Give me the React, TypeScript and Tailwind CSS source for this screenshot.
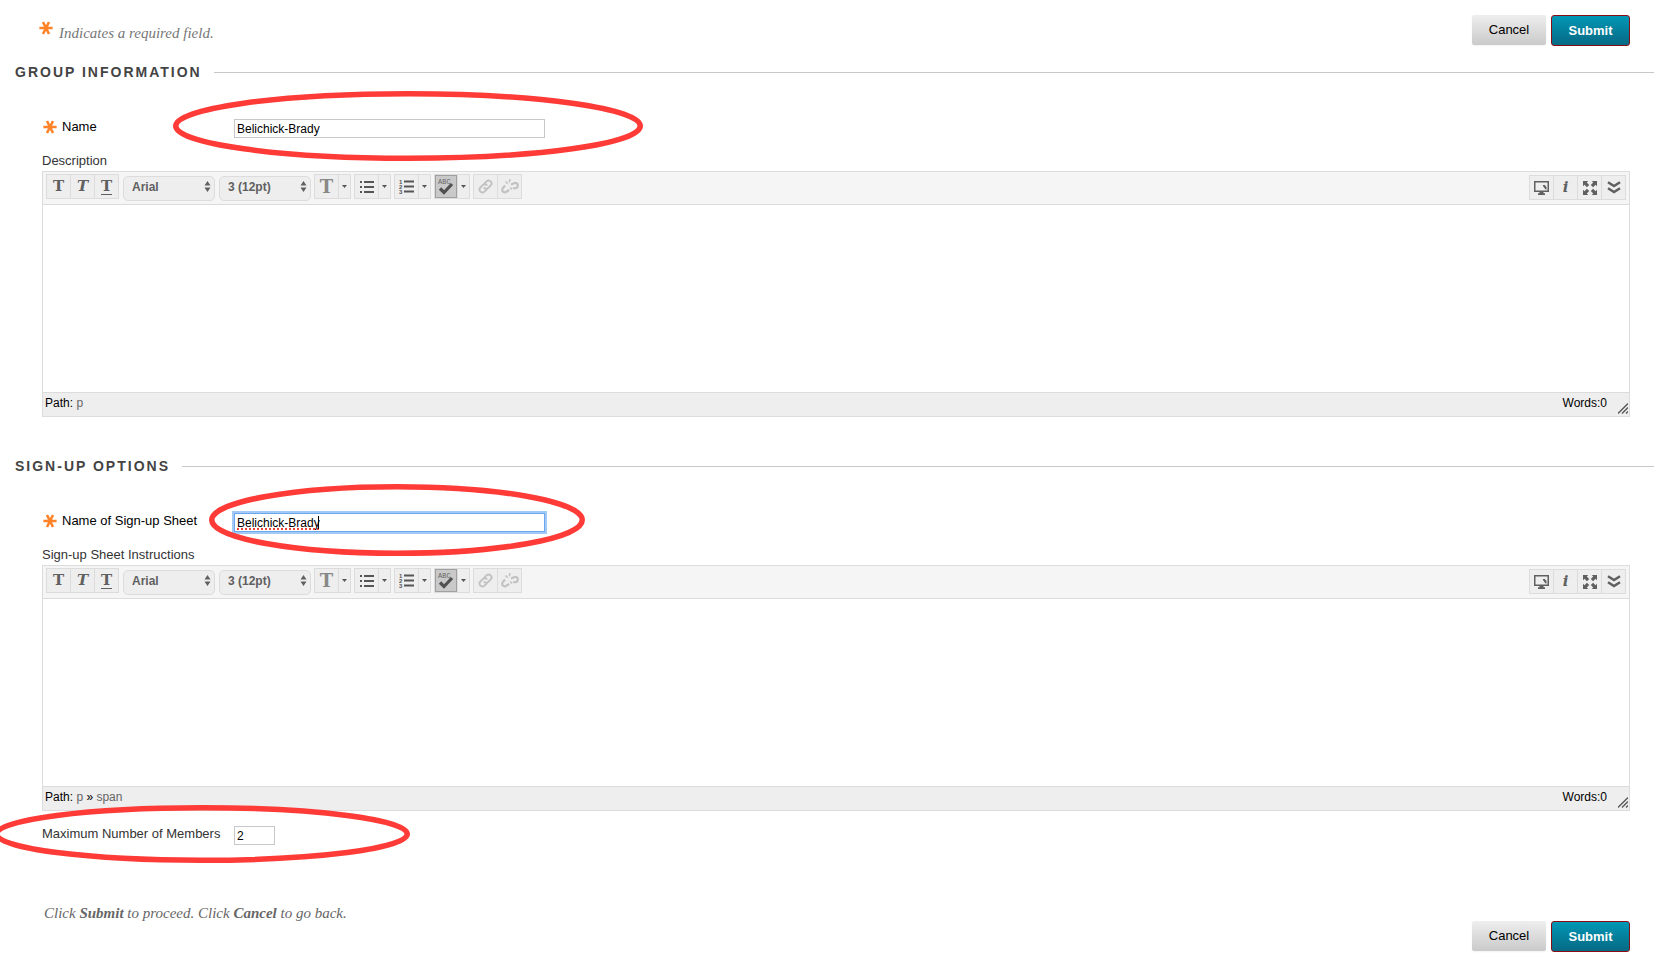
import React from "react";

interface EllipseProps {
  width: number;
  height: number;
  className: string;
}

const Ellipse: React.FC<EllipseProps> = ({ width, height, className }) => (
  <svg
    className={`absolute pointer-events-none max-w-none z-10 ${className}`}
    width={width}
    height={height}
    viewBox={`0 0 ${width} ${height}`}
    aria-hidden="true">
    <ellipse
      cx={width / 2}
      cy={height / 2}
      rx={width / 2 - 2.75}
      ry={height / 2 - 2.75}
      fill="none"
      stroke="#ff3b37"
      strokeWidth="5.5"
    />
  </svg>
);

const Asterisk: React.FC = () => (
  <svg className="w-[14px] h-[14px] shrink-0" viewBox="0 0 14 14" aria-hidden="true">
    <g stroke="#ff8329" strokeWidth="2.6">
      <path d="M0.4 7h13.2M4 1l6 12M10 1L4 13" />
    </g>
  </svg>
);

const Actions: React.FC = () => (
  <div className="flex items-start gap-[5px] text-[13px]">
    <button
      type="button"
      className="h-[30px] w-[74px] rounded-[2px] bg-linear-to-b from-[#eeeeee] to-[#cacaca] text-black shadow-xs">
      Cancel
    </button>
    <button
      type="submit"
      className="h-[31px] w-[79px] rounded-[3px] border border-[#8b0d14] bg-linear-to-b from-[#0099b7] to-[#066883] bg-origin-border font-bold text-white">
      Submit
    </button>
  </div>
);

const SectionHeading: React.FC<{ children: React.ReactNode }> = ({ children }) => (
  <div className="flex items-center gap-3 pl-[15px] pr-0.5">
    <h2 className="text-sm leading-[21px] font-bold tracking-[2px] uppercase text-[#444]">
      {children}
    </h2>
    <div className="h-px flex-1 bg-[#c8c8c8]" />
  </div>
);

const cell = "flex h-[23px] items-center justify-center";
const group =
  "flex border border-[#dcdcdc] bg-[#eeeeee] divide-x divide-[#dcdcdc] text-[#606060]";
const serif = "font-['DejaVu_Serif'] text-[15px] leading-none font-bold";

interface ToolProps {
  label: string;
  className?: string;
  disabled?: boolean;
  children: React.ReactNode;
}

const Tool: React.FC<ToolProps> = ({ label, className = "w-6", disabled, children }) => (
  <button
    type="button"
    aria-label={label}
    disabled={disabled}
    className={`${cell} last:w-[23px] ${className}`}>
    {children}
  </button>
);

const Caret: React.FC<{ label: string }> = ({ label }) => (
  <button type="button" aria-label={label} className={`${cell} w-[11px]`}>
    <svg width="5" height="3" viewBox="0 0 5 3">
      <path d="M0 0h5L2.5 3z" fill="#555" />
    </svg>
  </button>
);

const ToolSelect: React.FC<{ label: string; value: string }> = ({ label, value }) => (
  <div className="relative">
    <select
      aria-label={label}
      className="h-[25px] w-[92px] appearance-none rounded-[5px] border border-[#dcdcdc] bg-[#eeeeee] pl-2 pb-0.5 text-xs font-bold text-[#606060]">
      <option>{value}</option>
    </select>
    <svg
      className="absolute right-1 top-[7px] pointer-events-none"
      width="7"
      height="11"
      viewBox="0 0 7 11">
      <path d="M3.5 0L6.5 4.5h-6zM3.5 11L6.5 6.5h-6z" fill="#606060" />
    </svg>
  </div>
);

const BulletIcon: React.FC = () => (
  <svg width="14" height="12" viewBox="0 0 14 12" fill="#555">
    <path d="M0 0h2v2H0zM0 5h2v2H0zM0 10h2v2H0zM4 0h10v2H4zM4 5h10v2H4zM4 10h10v2H4z" />
  </svg>
);

const NumberIcon: React.FC = () => (
  <svg width="15" height="15" viewBox="0 0 15 15" fill="#555">
    <path d="M5 1.5h10v2H5zM5 6.5h10v2H5zM5 11.5h10v2H5z" />
    <g fontFamily="Liberation Sans" fontSize="6" fontWeight="bold">
      <text x="0" y="4.7">1</text>
      <text x="0" y="9.8">2</text>
      <text x="0" y="15">3</text>
    </g>
  </svg>
);

const SpellIcon: React.FC = () => (
  <svg width="22" height="23" viewBox="0 0 22 23">
    <text x="3" y="9" fontFamily="Liberation Mono" fontSize="7" fill="#666">
      ABC
    </text>
    <path d="M5 13.5l4 4L17 9" fill="none" stroke="#505050" strokeWidth="3.2" />
  </svg>
);

const LinkIcon: React.FC = () => (
  <svg width="15" height="15" viewBox="0 0 15 15" fill="none" stroke="#c2c2c2" strokeWidth="1.9">
    <g transform="rotate(-45 7.5 7.5)">
      <path d="M6.8 10.4H3.2a2.9 2.9 0 0 1 0-5.8h3.6a2.9 2.9 0 0 1 2.7 3.4" />
      <path d="M8.2 4.6h3.6a2.9 2.9 0 0 1 0 5.8H8.2A2.9 2.9 0 0 1 5.5 7" />
    </g>
  </svg>
);

const UnlinkIcon: React.FC = () => (
  <svg width="18" height="15" viewBox="0 0 18 15" fill="none" stroke="#c2c2c2" strokeWidth="2.2">
    <path d="M4 6.5L2 9a2.5 2.5 0 0 0 3.4 3.7L8.2 11" />
    <path d="M10 5.5l2.5-1a2.6 2.6 0 0 1 4.2 2.7c-.4 2-2.4 2.4-4.7 1.8" />
    <path d="M9 0l-.8 3.2M4.5 2.5l2.2 2.2M9.2 8.5l1.8 2" strokeWidth="1.5" />
  </svg>
);

const MonitorIcon: React.FC = () => (
  <svg width="15" height="14" viewBox="0 0 15 14" fill="#606060">
    <path d="M0 0h15v11H0zM1.5 1.5v8h12v-8z" fillRule="evenodd" />
    <path d="M8.8 4h2l1.7 2v2.5h-1L9 5zM5.5 11h4v1.2H11V14H4v-1.8h1.5z" />
  </svg>
);

const ExpandIcon: React.FC = () => (
  <svg width="14" height="14" viewBox="0 0 14 14" fill="#606060">
    <path d="M0 0h5.2L3.8 1.5l2.4 2.4-2.3 2.3-2.4-2.4L0 5.2zM14 0v5.2l-1.5-1.4-2.4 2.4-2.3-2.3 2.4-2.4L8.8 0zM0 14V8.8l1.5 1.4 2.4-2.4 2.3 2.3-2.4 2.4L5.2 14zM14 14H8.8l1.4-1.5-2.4-2.4 2.3-2.3 2.4 2.4L14 8.8z" />
  </svg>
);

const ChevronsIcon: React.FC = () => (
  <svg width="14" height="13" viewBox="0 0 14 13" fill="none" stroke="#606060" strokeWidth="2.5">
    <path d="M1 1.2L7 5l6-3.8M1 7.2L7 11l6-3.8" />
  </svg>
);

interface EditorProps {
  id: string;
  label: string;
  path: string[];
}

const Editor: React.FC<EditorProps> = ({ id, label, path }) => (
  <div className="ml-[42px] mr-[26px] mt-3">
    <label htmlFor={id} className="block pt-px text-[13px] leading-5 text-[#333]">
      {label}
    </label>
    <div className="border border-[#dcdcdc]">
      <div className="flex items-start justify-between border-b border-[#dcdcdc] bg-[#f5f5f5] px-[3px] h-[33px] pt-0.5">
        <div className="flex items-start gap-[3px]">
          <div className={`${group} mr-px`}>
            <Tool label="Bold">
              <span className={serif}>T</span>
            </Tool>
            <Tool label="Italic">
              <span className={`${serif} italic`}>T</span>
            </Tool>
            <Tool label="Underline">
              <span className={`${serif} border-b border-[#606060]`}>T</span>
            </Tool>
          </div>
          <div className="flex gap-1">
            <ToolSelect label="Font" value="Arial" />
            <ToolSelect label="Font size" value="3 (12pt)" />
          </div>
          <div className={group}>
            <Tool label="Text color">
              <span className="font-['DejaVu_Serif'] text-lg leading-none font-bold text-[#888]">T</span>
            </Tool>
            <Caret label="Text color options" />
          </div>
          <div className={group}>
            <Tool label="Bulleted list">
              <BulletIcon />
            </Tool>
            <Caret label="Bulleted list options" />
          </div>
          <div className={group}>
            <Tool label="Numbered list">
              <NumberIcon />
            </Tool>
            <Caret label="Numbered list options" />
          </div>
          <div className={group}>
            <Tool
              label="Spell check"
              className="w-[23px] bg-[#c9c9c9] shadow-[inset_0_0_0_1px_#a0a0a0]">
              <SpellIcon />
            </Tool>
            <Caret label="Spell check options" />
          </div>
          <div className={group}>
            <Tool label="Insert link" disabled>
              <LinkIcon />
            </Tool>
            <Tool label="Remove link" disabled>
              <UnlinkIcon />
            </Tool>
          </div>
        </div>
        <div className={`${group} mt-px`}>
          <Tool label="Preview">
            <MonitorIcon />
          </Tool>
          <Tool label="Help">
            <span className={`${serif} italic`}>i</span>
          </Tool>
          <Tool label="Full screen">
            <ExpandIcon />
          </Tool>
          <Tool label="Show more">
            <ChevronsIcon />
          </Tool>
        </div>
      </div>
      <textarea id={id} className="block h-[187px] w-full resize-none bg-white p-2 outline-none" />
      <div className="flex h-[24px] justify-between border-t border-[#dcdcdc] bg-[#eeeeee] pl-0.5 pr-px text-xs leading-5">
        <div>
          Path:{" "}
          {path.map((tag, i) => (
            <React.Fragment key={tag}>
              {i > 0 && " » "}
              <a href="#" className="text-[#666]">
                {tag}
              </a>
            </React.Fragment>
          ))}
        </div>
        <div className="flex gap-[11px]">
          <span>Words:0</span>
          <svg className="mt-2.5" width="10" height="11" viewBox="0 0 10 11">
            <path d="M0 10.5L10 .5M4 10.5l6-6M8 10.5l2-2" stroke="#555" strokeWidth="1.3" />
          </svg>
        </div>
      </div>
    </div>
  </div>
);

const App: React.FC = () => {
  return (
    <form
      onSubmit={(e) => e.preventDefault()}
      className="overflow-x-hidden bg-white pt-[15px] pb-2 font-['Liberation_Sans',Arial,sans-serif] text-black">
      <div className="flex items-start justify-between pl-[39px] pr-[26px]">
        <div className="flex gap-1.5 pt-1.5">
          <Asterisk />
          <p className="pt-0.5 font-['Liberation_Serif',serif] text-[15px] leading-5 italic text-[#777]">
            Indicates a required field.
          </p>
        </div>
        <Actions />
      </div>

      <div className="mt-4">
        <SectionHeading>Group Information</SectionHeading>
        <div className="relative mt-9 flex h-[19px] items-start pl-[43px]">
          <label htmlFor="name" className="flex w-[191px] items-center gap-[5px] text-[13px] leading-4">
            <Asterisk />
            Name
          </label>
          <input
            id="name"
            defaultValue="Belichick-Brady"
            className="h-[19px] w-[311px] border border-[#c8c8c8] px-0.5 text-xs outline-none"
          />
          <Ellipse width={470} height={70} className="left-[173px] -top-7" />
        </div>
        <Editor id="description" label="Description" path={["p"]} />
      </div>

      <div className="mt-[39px]">
        <SectionHeading>Sign-up Options</SectionHeading>
        <div className="relative mt-9 flex h-[19px] items-start pl-[43px]">
          <label htmlFor="sheet" className="flex w-[191px] items-center gap-[5px] text-[13px] leading-4">
            <Asterisk />
            Name of Sign-up Sheet
          </label>
          <div className="relative">
            <input
              id="sheet"
              defaultValue="Belichick-Brady"
              className="block h-[19px] w-[311px] border border-[#6ba7ee] px-0.5 text-xs outline-none ring-2 ring-[#7cb2f2]/70"
            />
            {/* misspelling dots and text cursor */}
            <div className="absolute left-[3px] bottom-0.5 w-[82px] border-b-2 border-dotted border-[#ee4030]" />
            <div className="absolute left-[84px] top-[3px] h-[13px] w-px bg-black" />
          </div>
          <Ellipse width={376} height={72} className="left-[209px] -top-[29px]" />
        </div>
        <Editor id="instructions" label="Sign-up Sheet Instructions" path={["p", "span"]} />
        <div className="relative mt-[15px] flex h-[19px] items-start pl-[42px]">
          <label htmlFor="max" className="w-48 text-[13px] leading-4 text-[#333]">
            Maximum Number of Members
          </label>
          <input
            id="max"
            defaultValue="2"
            className="h-[19px] w-[41px] border border-[#c8c8c8] px-0.5 text-xs outline-none"
          />
          <Ellipse width={416} height={58} className="-left-1.5 -top-[21px]" />
        </div>
      </div>

      <div className="mt-[58px] flex items-start justify-between pl-11 pr-[26px]">
        <p className="font-['Liberation_Serif',serif] text-[15px] leading-5 italic text-[#666]">
          Click <strong>Submit</strong> to proceed. Click <strong>Cancel</strong> to go back.
        </p>
        <div className="pt-[18px]">
          <Actions />
        </div>
      </div>
    </form>
  );
};

export default App;
